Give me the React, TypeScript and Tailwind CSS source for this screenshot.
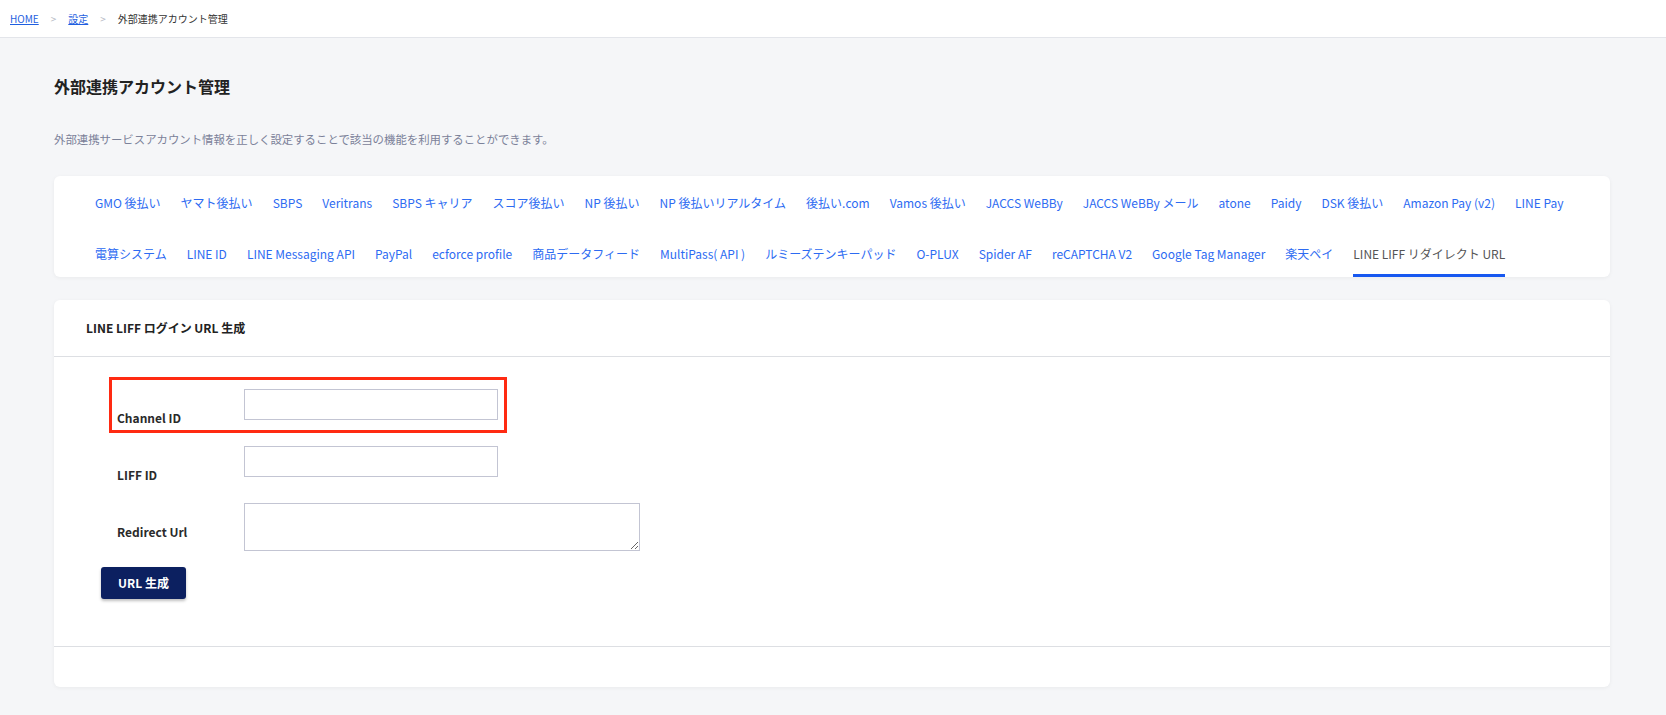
import React from "react";

const tabRows: string[][] = [
  [
    "GMO 後払い",
    "ヤマト後払い",
    "SBPS",
    "Veritrans",
    "SBPS キャリア",
    "スコア後払い",
    "NP 後払い",
    "NP 後払いリアルタイム",
    "後払い.com",
    "Vamos 後払い",
    "JACCS WeBBy",
    "JACCS WeBBy メール",
    "atone",
    "Paidy",
    "DSK 後払い",
    "Amazon Pay (v2)",
    "LINE Pay",
  ],
  [
    "電算システム",
    "LINE ID",
    "LINE Messaging API",
    "PayPal",
    "ecforce profile",
    "商品データフィード",
    "MultiPass( API )",
    "ルミーズテンキーパッド",
    "O-PLUX",
    "Spider AF",
    "reCAPTCHA V2",
    "Google Tag Manager",
    "楽天ペイ",
    "LINE LIFF リダイレクト URL",
  ],
];

const ACTIVE = "LINE LIFF リダイレクト URL";

function Breadcrumb() {
  return (
    <div className="h-[38px] bg-white border-b border-[#e3e5ea] flex items-center px-[10px] gap-[12px] text-[10px]">
      <a href="#" className="text-[#1f5fe0] underline">HOME</a>
      <span className="text-[#b5b9c4]">&gt;</span>
      <a href="#" className="text-[#1f5fe0] underline">設定</a>
      <span className="text-[#b5b9c4]">&gt;</span>
      <span className="text-[#333]">外部連携アカウント管理</span>
    </div>
  );
}

function TabCard() {
  return (
    <div className="bg-white rounded-[6px] shadow-[0_1px_4px_rgba(0,0,0,0.05)] pt-[4px] pl-[41px] pr-[20px] flex flex-col gap-[5px]">
      {tabRows.map((row, i) => (
        <div key={i} className="flex gap-x-[20px]">
          {row.map((t) => (
            <a
              key={t}
              href="#"
              className={
                t === ACTIVE
                  ? "h-[46px] flex items-center whitespace-nowrap text-[12px] text-[#555] border-b-[3px] border-[#1758f0] pt-[3px]"
                  : "h-[46px] flex items-center whitespace-nowrap text-[12px] text-[#2d6bf2]"
              }
            >
              {t}
            </a>
          ))}
        </div>
      ))}
    </div>
  );
}

function FormCard() {
  return (
    <div className="mt-[23px] bg-white rounded-[6px] shadow-[0_1px_4px_rgba(0,0,0,0.05)]">
      <div className="h-[57px] border-b border-[#dddfe3] flex items-center px-[32px]">
        <h2 className="text-[12px] font-bold text-[#222]">LINE LIFF ログイン URL 生成</h2>
      </div>

      <div className="pt-[32px] pl-[47px] pb-[47px] border-b border-[#dddfe3]">
        <div className="pl-[16px] flex flex-col gap-[19px]">
          {/* row 1 with highlight box */}
          <div className="relative flex w-fit">
            <span className="absolute -left-[8px] -right-[9px] -top-[12px] -bottom-[6px] border-[3px] border-[#ff2a12]" />
            <label className="w-[127px] pt-[20px] leading-[18px] text-[12px] font-bold text-[#2a2a2a]">Channel ID</label>
            <input type="text" className="w-[254px] h-[31px] border border-[#c3c5d3] outline-none" />
          </div>

          <div className="flex w-fit">
            <label className="w-[127px] pt-[20px] leading-[18px] text-[12px] font-bold text-[#2a2a2a]">LIFF ID</label>
            <input type="text" className="w-[254px] h-[31px] border border-[#c3c5d3] outline-none" />
          </div>

          <div className="flex w-fit">
            <label className="w-[127px] pt-[20px] leading-[18px] text-[12px] font-bold text-[#2a2a2a]">Redirect Url</label>
            <textarea className="w-[396px] h-[48px] border border-[#c3c5d3] outline-none" />
          </div>
        </div>

        <button className="mt-[16px] w-[85px] h-[32px] rounded-[3px] bg-[#0c2060] text-white text-[12px] font-bold shadow-[0_2px_3px_rgba(0,0,0,0.25)]">
          URL 生成
        </button>
      </div>

      <div className="h-[40px]" />
    </div>
  );
}

export default function App() {
  return (
    <div
      className="min-h-screen bg-[#f5f6f8]"
      style={{ fontFamily: '"Noto Sans CJK JP", "Noto Sans", sans-serif' }}
    >
      <Breadcrumb />
      <main className="pl-[54px] pr-[56px] pt-[37px] pb-[28px]">
        <h1 className="text-[16px] leading-[22px] font-bold text-[#222]">外部連携アカウント管理</h1>
        <p className="mt-[34px] text-[11.4px] leading-[16px] text-[#7b8199]">
          外部連携サービスアカウント情報を正しく設定することで該当の機能を利用することができます。
        </p>
        <div className="mt-[29px]">
          <TabCard />
          <FormCard />
        </div>
      </main>
    </div>
  );
}
